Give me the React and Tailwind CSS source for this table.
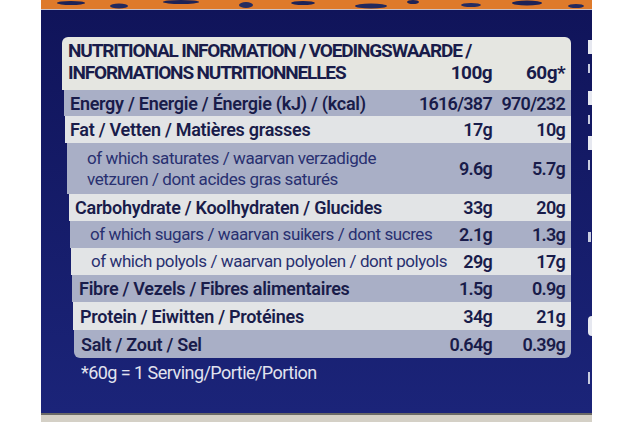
export default function App(){

  const rows = [
    { label: "Energy / Energie / Énergie (kJ) / (kcal)", a: "1616/387", b: "970/232", shade: true, h: "h-[26px]", ml: "ml-[2px]", pl: "pl-[6px]" },
    { label: "Fat / Vetten / Matières grasses", a: "17g", b: "10g", shade: false, h: "h-[27px]", ml: "ml-[3px]", pl: "pl-[5px]" },
    { label: "of which saturates / waarvan verzadigde", label2: "vetzuren / dont acides gras saturés", a: "9.6g", b: "5.7g", shade: true, sub: true, h: "h-[51px]", ml: "ml-[5px]", pl: "pl-[20px]" },
    { label: "Carbohydrate / Koolhydraten / Glucides", a: "33g", b: "20g", shade: false, h: "h-[27px]", ml: "ml-[7px]", pl: "pl-[6px]" },
    { label: "of which sugars / waarvan suikers / dont sucres", a: "2.1g", b: "1.3g", shade: true, sub: true, h: "h-[27px]", ml: "ml-[8px]", pl: "pl-[20px]" },
    { label: "of which polyols / waarvan polyolen / dont polyols", a: "29g", b: "17g", shade: false, sub: true, h: "h-[27px]", ml: "ml-[9px]", pl: "pl-[20px]" },
    { label: "Fibre / Vezels / Fibres alimentaires", a: "1.5g", b: "0.9g", shade: true, h: "h-[27px]", ml: "ml-[10px]", pl: "pl-[7px]" },
    { label: "Protein / Eiwitten / Protéines", a: "34g", b: "21g", shade: false, h: "h-[28px]", ml: "ml-[11px]", pl: "pl-[7px]" },
    { label: "Salt / Zout / Sel", a: "0.64g", b: "0.39g", shade: true, h: "h-[28px]", ml: "ml-[12px]", pl: "pl-[7px]", last: true },
  ]

  return(

    <div className="w-[633px] h-[422px] bg-white flex font-['Roboto',sans-serif] overflow-hidden">

      <div className="w-[41px] shrink-0 bg-white"></div>

      <div className="w-[551px] shrink-0 flex flex-col">

        {/* orange pack print */}
        <svg width="551" height="10" viewBox="0 0 551 10" className="block shrink-0">
          <rect width="551" height="10" fill="#de7a2b" />
          <ellipse cx="30" cy="3" rx="14" ry="2" fill="#1d2256" />
          <ellipse cx="78" cy="6" rx="9" ry="2.5" fill="#22295e" />
          <ellipse cx="140" cy="2" rx="18" ry="2" fill="#1d2256" />
          <ellipse cx="205" cy="5" rx="7" ry="3" fill="#262c60" />
          <ellipse cx="262" cy="3" rx="12" ry="2" fill="#1d2256" />
          <ellipse cx="330" cy="6" rx="16" ry="2.5" fill="#22295e" />
          <ellipse cx="372" cy="2" rx="6" ry="2" fill="#1d2256" />
          <ellipse cx="430" cy="5" rx="10" ry="2" fill="#262c60" />
          <ellipse cx="486" cy="3" rx="15" ry="2.5" fill="#1d2256" />
          <ellipse cx="535" cy="6" rx="8" ry="2" fill="#22295e" />
          <rect y="9" width="551" height="1" fill="#c9c2c8" />
        </svg>

        <div className="flex-1 flex bg-linear-to-b from-[#10145a] to-[#1b2479]">

          <div className="w-[547px] shrink-0 pt-[27px] pl-[21px]">

            <div className="w-[509px] flex flex-col text-[#191c4a]">

              {/* header */}
              <div className="h-[53px] bg-[#e5e6e1] rounded-t-[6px] pl-[6px] pr-[6px] pt-[3px] font-bold text-[19px] leading-[22px] tracking-[-0.06em] whitespace-nowrap">
                <div>NUTRITIONAL INFORMATION / VOEDINGSWAARDE /</div>
                <div className="flex">
                  <div className="flex-1">INFORMATIONS NUTRITIONNELLES</div>
                  <div className="w-[80px] text-right tracking-[-0.03em]">100g</div>
                  <div className="w-[73px] text-right tracking-[-0.03em]">60g*</div>
                </div>
              </div>

              {rows.map((row, index) => (
                <div
                  key={index}
                  className={
                    "flex items-center pr-[6px] text-[18px] whitespace-nowrap " + row.h + " " + row.ml + " " +
                    (row.shade ? "bg-[#a9afc6]" : "bg-[#e2e4e6]") +
                    (row.last ? " rounded-b-[6px]" : "")
                  }
                >
                  <div className={"flex-1 min-w-0 " + row.pl}>
                    {row.sub ? (
                      <div className="font-normal text-[17px] text-[#283070] leading-[21px] tracking-[-0.025em]">
                        <div>{row.label}</div>
                        {row.label2 && <div>{row.label2}</div>}
                      </div>
                    ) : (
                      <div className="font-semibold leading-[21px] tracking-[-0.015em]">{row.label}</div>
                    )}
                  </div>
                  <div className="w-[80px] shrink-0 text-right font-semibold tracking-[-0.04em]">{row.a}</div>
                  <div className="w-[73px] shrink-0 text-right font-semibold tracking-[-0.04em]">{row.b}</div>
                </div>
              ))}

            </div>

            {/* footnote */}
            <div className="mt-[4px] pl-[19px] text-[18px] leading-[22px] text-[#e1e3ef] tracking-[-0.03em]">
              *60g = 1 Serving/Portie/Portion
            </div>

          </div>

          {/* cut-off print of next panel */}
          <div className="w-[4px] shrink-0 flex flex-col">
            <div className="h-[30px]"></div>
            <div className="h-[14px] bg-[#e6e8f0]"></div>
            <div className="h-[10px]"></div>
            <div className="h-[9px] w-[2px] bg-[#c9cde0]"></div>
            <div className="h-[18px]"></div>
            <div className="h-[14px] bg-[#e6e8f0]"></div>
            <div className="h-[10px]"></div>
            <div className="h-[9px] w-[2px] bg-[#c9cde0]"></div>
            <div className="h-[12px]"></div>
            <div className="h-[14px] bg-[#e6e8f0]"></div>
            <div className="h-[10px]"></div>
            <div className="h-[10px] w-[2px] bg-[#c9cde0]"></div>
            <div className="h-[62px]"></div>
            <div className="h-[10px] w-[3px] bg-[#c9cde0]"></div>
            <div className="h-[74px]"></div>
            <div className="h-[20px] w-[4px] rounded-l-full bg-[#e6e8f0]"></div>
            <div className="h-[36px]"></div>
            <div className="h-[12px] w-[2px] bg-[#c9cde0]"></div>
          </div>

        </div>

        {/* bottom edge of the pack */}
        <div className="h-[9px] shrink-0 bg-[#d4d0c6] border-t-[2px] border-[#6b6a66]"></div>

      </div>

      <div className="flex-1 bg-white"></div>

    </div>

  )

}
